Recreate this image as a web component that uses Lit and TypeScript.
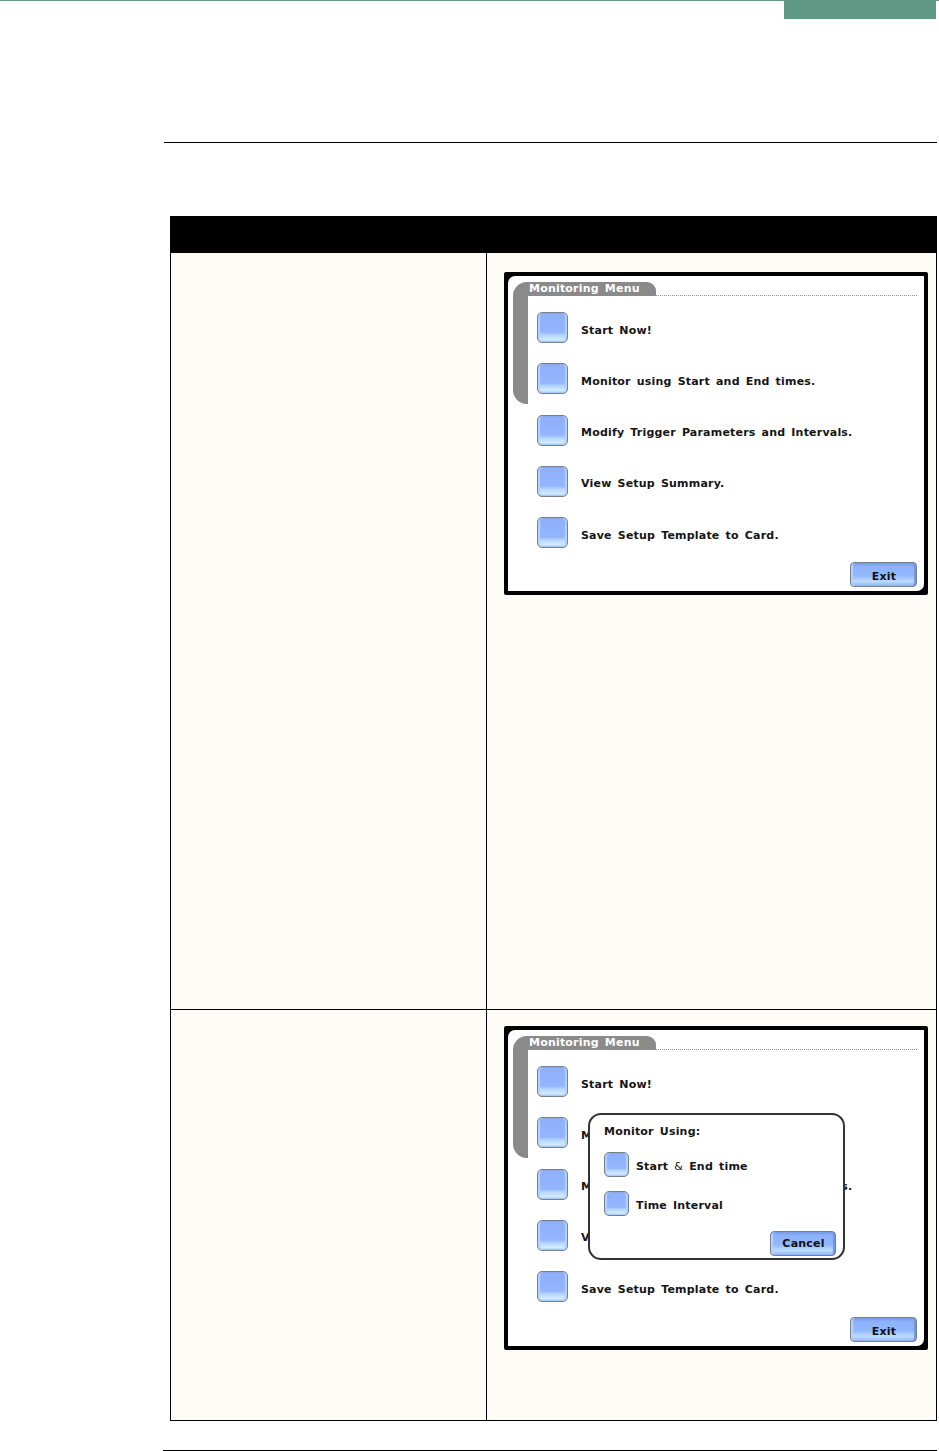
import { LitElement, html, css } from "lit";
import { customElement, property } from "lit/decorators.js";

@customElement("device-screen")
class DeviceScreen extends LitElement {
  @property({ type: Boolean }) dialog = false;
  static styles = css`
    :host { display: block; }
    .screen {
      box-sizing: border-box; width: 424px; height: 323px; padding: 4px;
      background: #000; border-radius: 2px;
    }
    .screen.tall { height: 324px; }
    .panel {
      position: relative; box-sizing: border-box; height: 100%;
      background: #fff; border-radius: 7px 0 7px 0;
      padding: 6px 7px 0 5px;
      font: bold 11px "DejaVu Sans", sans-serif; color: #151515;
      letter-spacing: 0.2px; word-spacing: 2px;
    }
    .head { display: flex; align-items: flex-end; height: 14px; }
    .title {
      box-sizing: border-box; width: 143px; height: 14px; padding-left: 16px;
      background: #8a8a8a; color: #fff; line-height: 13px;
      border-radius: 14px 9px 0 0;
    }
    .dots { flex: 1; border-bottom: 1px dotted #8a8a8a; margin-bottom: 0; }
    .body { display: flex; align-items: flex-start; }
    .rail { width: 15px; height: 108px; flex: none; background: #8a8a8a; border-radius: 0 0 0 14px; }
    .rows { display: flex; flex-direction: column; gap: 20.3px; padding: 16px 0 0 9px; }
    .row { display: flex; align-items: center; gap: 13px; height: 31px; white-space: nowrap; }
    .label { padding-top: 5px; }
    .icon {
      box-sizing: border-box; width: 31px; height: 31px; flex: none;
      border: 1px solid #77808c; border-radius: 5px;
      background: linear-gradient(#8eaef8 0, #8fb0fb 10%, #93b6ff 66%, #b6d6ff 76%, #d2ebff 92%, #9dbff8 100%);
      box-shadow: inset 2px 0 1px #b5d2ff, inset -2px 0 1px #b5d2ff, inset 0 1px 0 #7f9fe4;
    }
    .foot { display: flex; justify-content: flex-end; margin-top: 14px; }
    .tall .foot { margin-top: 15px; }
    .btn {
      box-sizing: border-box; width: 67px; height: 25px; display: flex;
      align-items: center; justify-content: center; padding-left: 1px;
      border: 1px solid #77808c; border-radius: 4px; color: #111;
      background: linear-gradient(#6f96e8 0, #8eb0fc 14%, #93b8ff 55%, #bcdcff 80%, #8fb4f6 100%);
      box-shadow: inset 2px 0 1px #b5d2ff, inset -2px 0 1px #6f96e8;
    }
    .exit { padding-top: 3px; }
    .dlg {
      position: absolute; left: 80px; top: 83px; box-sizing: border-box;
      width: 257px; height: 147px; padding: 9px 7px 0 14px;
      background: #fff; border: 2px solid #333; border-radius: 13px;
    }
    .dlg-title { height: 15px; line-height: 15px; }
    .opts { display: flex; flex-direction: column; gap: 14px; margin-top: 13px; }
    .opt { display: flex; align-items: center; gap: 7px; height: 25px; white-space: nowrap; }
    .opt .icon { width: 25px; height: 25px; }
    .opt .label { padding-top: 4px; }
    .dlg .foot { margin-top: 15px; }
    .dlg .btn { height: 25px; width: 66px; }
    .amp { font-weight: normal; }
  `;
  render() {
    const rows = [
      "Start Now!",
      "Monitor using Start and End times.",
      "Modify Trigger Parameters and Intervals.",
      "View Setup Summary.",
      "Save Setup Template to Card.",
    ];
    return html`
      <div class="screen ${this.dialog ? "tall" : ""}">
        <div class="panel">
          <div class="head"><div class="title">Monitoring Menu</div><div class="dots"></div></div>
          <div class="body">
            <div class="rail"></div>
            <div class="rows">
              ${rows.map((r) => html`<div class="row"><span class="icon"></span><span class="label">${r}</span></div>`)}
            </div>
          </div>
          <div class="foot"><div class="btn exit">Exit</div></div>
          ${this.dialog
            ? html`<div class="dlg">
                <div class="dlg-title">Monitor Using:</div>
                <div class="opts">
                  <div class="opt"><span class="icon"></span><span class="label">Start <span class="amp">&amp;</span> End time</span></div>
                  <div class="opt"><span class="icon"></span><span class="label">Time Interval</span></div>
                </div>
                <div class="foot"><div class="btn">Cancel</div></div>
              </div>`
            : ""}
        </div>
      </div>
    `;
  }
}

@customElement("app-root")
class AppRoot extends LitElement {
  static styles = css`
    :host { display: block; width: 939px; height: 1451px; background: #fff; overflow: hidden; }
    .top { display: flex; justify-content: flex-end; border-top: 1px solid #5f9885; padding-right: 3px; }
    .tab { width: 152px; height: 18px; background: #5f9885; }
    .rule { height: 1px; background: #000; margin: 0 2px 0 164px; }
    .rule.a { margin-top: 123px; }
    .rule.b { margin-top: 29px; margin-left: 163px; }
    .table {
      box-sizing: border-box; width: 767px; margin: 73px 0 0 170px;
      display: grid; grid-template-columns: 316px 1fr;
      border: solid #000; border-width: 0 1px 1px 1px; background: #fdfcf6;
    }
    .hdr { grid-column: 1 / -1; height: 37px; margin: 0 -1px; background: #000; }
    .cell { box-sizing: border-box; }
    .left { border-right: 1px solid #000; }
    .r1 { height: 757px; border-bottom: 1px solid #000; }
    .r2 { height: 410px; }
    .right { padding-left: 17px; }
    .right.r1 { padding-top: 19px; }
    .right.r2 { padding-top: 16px; }
  `;
  render() {
    return html`
      <div class="top"><div class="tab"></div></div>
      <div class="rule a"></div>
      <div class="table">
        <div class="hdr"></div>
        <div class="cell left r1"></div>
        <div class="cell right r1"><device-screen></device-screen></div>
        <div class="cell left r2"></div>
        <div class="cell right r2"><device-screen dialog></device-screen></div>
      </div>
      <div class="rule b"></div>
    `;
  }
}
